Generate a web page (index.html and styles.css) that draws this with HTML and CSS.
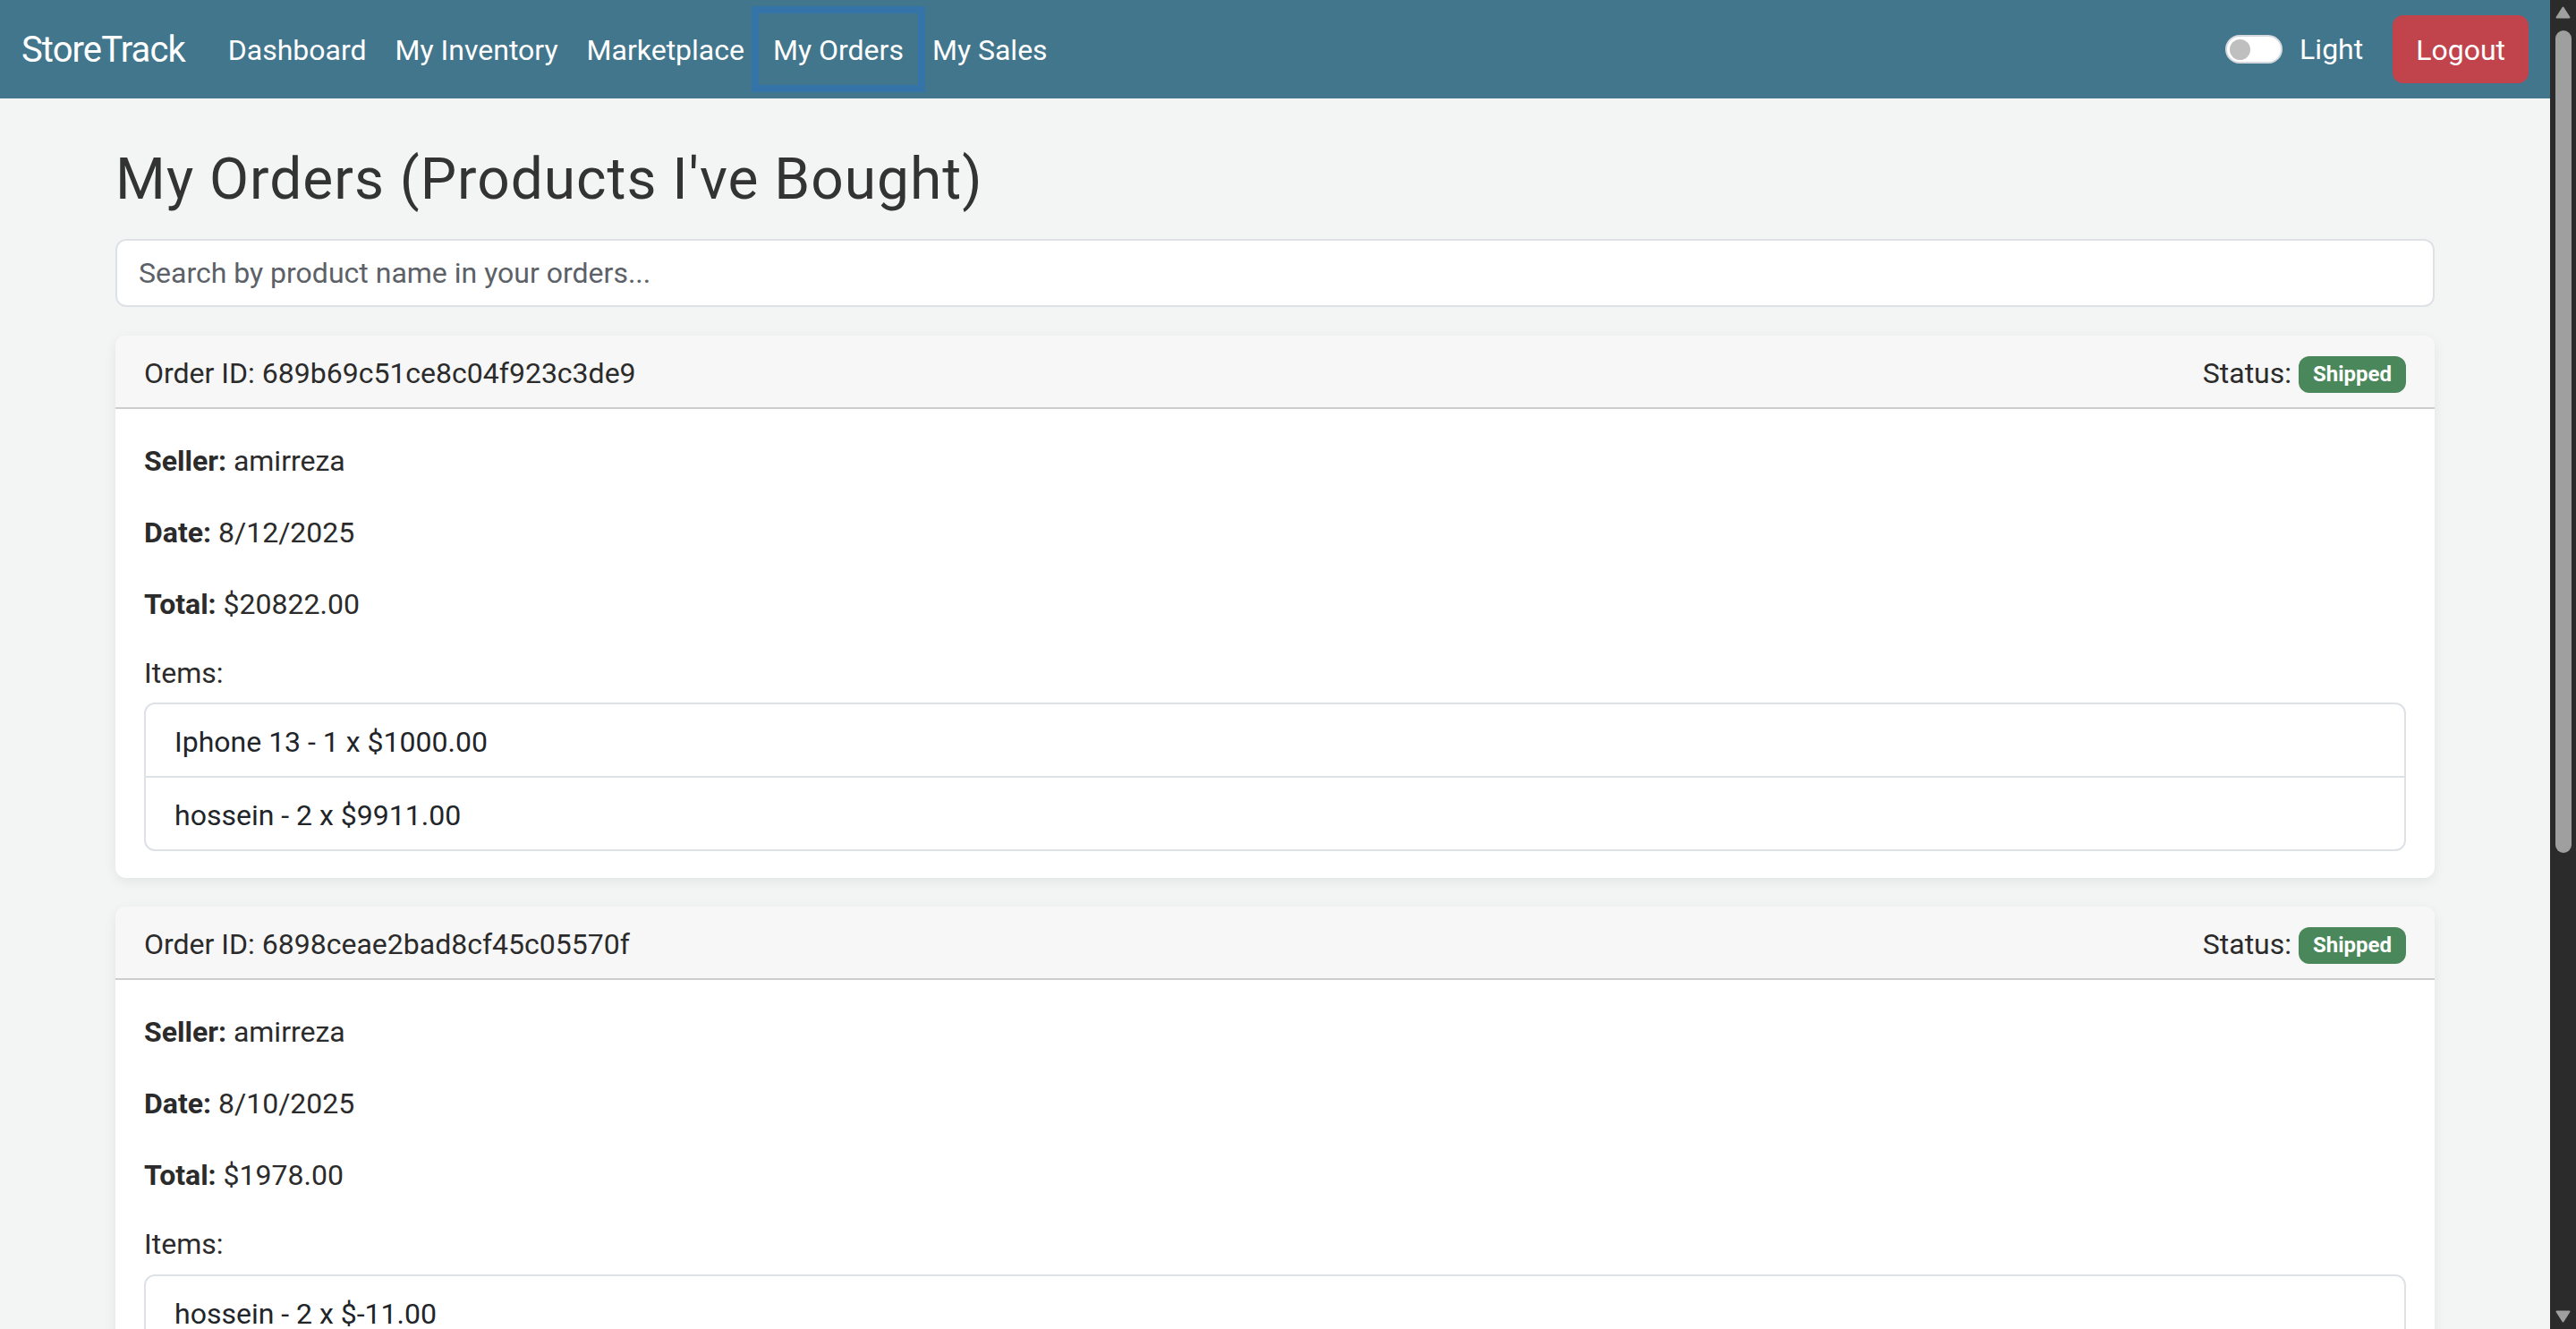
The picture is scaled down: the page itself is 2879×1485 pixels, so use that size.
FILE: index.html
```html
<!DOCTYPE html>
<html lang="en">
<head>
<meta charset="utf-8">
<title>StoreTrack - My Orders</title>
<link rel="stylesheet" href="styles.css">
</head>
<body>
<div class="app">
  <div class="page">
    <nav class="navbar">
      <div class="nav-left">
        <a class="brand" href="#">StoreTrack</a>
        <ul class="nav-links">
          <li><a class="nav-link" href="#">Dashboard</a></li>
          <li><a class="nav-link" href="#">My Inventory</a></li>
          <li><a class="nav-link" href="#">Marketplace</a></li>
          <li><a class="nav-link is-focused" href="#">My Orders</a></li>
          <li><a class="nav-link" href="#">My Sales</a></li>
        </ul>
      </div>
      <div class="nav-right">
        <label class="theme-toggle">
          <span class="switch"><span class="knob"></span></span>
          <span class="toggle-label">Light</span>
        </label>
        <button class="btn-logout" type="button">Logout</button>
      </div>
    </nav>

    <main class="container">
      <h2 class="page-title">My Orders (Products I've Bought)</h2>
      <input class="search" type="text" placeholder="Search by product name in your orders...">

      <section class="order-card">
        <div class="order-header">
          <span>Order ID: 689b69c51ce8c04f923c3de9</span>
          <span>Status: <span class="badge">Shipped</span></span>
        </div>
        <div class="order-body">
          <p><strong>Seller:</strong> amirreza</p>
          <p><strong>Date:</strong> 8/12/2025</p>
          <p><strong>Total:</strong> $20822.00</p>
          <h6 class="items-title">Items:</h6>
          <ul class="item-list">
            <li>Iphone 13 - 1 x $1000.00</li>
            <li>hossein - 2 x $9911.00</li>
          </ul>
        </div>
      </section>

      <section class="order-card">
        <div class="order-header">
          <span>Order ID: 6898ceae2bad8cf45c05570f</span>
          <span>Status: <span class="badge">Shipped</span></span>
        </div>
        <div class="order-body">
          <p><strong>Seller:</strong> amirreza</p>
          <p><strong>Date:</strong> 8/10/2025</p>
          <p><strong>Total:</strong> $1978.00</p>
          <h6 class="items-title">Items:</h6>
          <ul class="item-list">
            <li>hossein - 2 x $-11.00</li>
            <li>Iphone 13 - 2 x $1000.00</li>
          </ul>
        </div>
      </section>
    </main>
  </div>

  <aside class="scrollbar" aria-hidden="true">
    <span class="sb-button">
      <svg width="17" height="14" viewBox="0 0 17 14"><path d="M8.5 1.5 L15.5 12.5 L1.5 12.5 Z" fill="#9f9f9f" stroke="#9f9f9f" stroke-width="2" stroke-linejoin="round"/></svg>
    </span>
    <div class="sb-track"><div class="sb-thumb"></div></div>
    <span class="sb-button sb-button-down">
      <svg width="17" height="14" viewBox="0 0 17 14"><path d="M1.5 1.5 L15.5 1.5 L8.5 12.5 Z" fill="#9f9f9f" stroke="#9f9f9f" stroke-width="2" stroke-linejoin="round"/></svg>
    </span>
  </aside>
</div>
</body>
</html>
```
FILE: styles.css
```css
html, body {
  margin: 0;
  padding: 0;
}

body {
  background: #f3f5f4;
  color: #212529;
  font-family: "Segoe UI", Roboto, "Noto Sans", sans-serif;
  font-size: 32px;
  line-height: 1.5;
}

/* App frame: page + window scrollbar */
.app {
  display: flex;
  height: 100vh;
  overflow: hidden;
}

.page {
  flex: 1;
  min-width: 0;
  overflow: hidden;
}

.scrollbar {
  flex: none;
  width: 29px;
  background: #2b2b2b;
  display: flex;
  flex-direction: column;
  align-items: center;
}

.sb-button {
  display: flex;
  justify-content: center;
  height: 29px;
  padding-top: 7px;
  box-sizing: border-box;
}

.sb-button-down {
  padding-top: 8px;
}

.sb-button svg {
  display: block;
}

.sb-track {
  flex: 1;
  padding-top: 5px;
}

.sb-thumb {
  width: 18px;
  height: 919px;
  border-radius: 9px;
  background: #9f9f9f;
}

/* Navbar */
.navbar {
  display: flex;
  justify-content: space-between;
  align-items: center;
  padding: 15px 24px;
  background: #42768c;
}

.nav-left,
.nav-right {
  display: flex;
  align-items: center;
}

.brand {
  color: #fff;
  text-decoration: none;
  font-size: 40px;
  line-height: 60px;
  letter-spacing: -0.9px;
  padding: 11px 0 9px;
  margin-right: 32px;
}

.nav-links {
  display: flex;
  list-style: none;
  margin: 0;
  padding: 0;
}

.nav-link {
  display: block;
  padding: 17px 16px 15px;
  color: #fff;
  text-decoration: none;
  line-height: 48px;
}

.nav-link.is-focused {
  box-shadow: 0 0 0 8px rgba(13, 110, 253, 0.25);
}

.theme-toggle {
  display: flex;
  align-items: center;
  gap: 19px;
  color: #fff;
  margin-right: 33px;
}

.switch {
  box-sizing: border-box;
  width: 64px;
  height: 32px;
  border: 2px solid #d5d9dd;
  border-radius: 16px;
  background: #fff;
  display: flex;
  align-items: center;
  padding-left: 3px;
}

.knob {
  width: 23px;
  height: 23px;
  border-radius: 50%;
  background: #bfbfbf;
}

.btn-logout {
  font: inherit;
  line-height: 48px;
  color: #fff;
  background: #c1444c;
  border: 2px solid #c1444c;
  border-radius: 12px;
  padding: 13px 24px 11px;
}

/* Main */
.container {
  box-sizing: border-box;
  max-width: 2640px;
  margin: 53px auto 0;
  padding: 0 24px 32px;
}

.page-title {
  font-size: 64px;
  font-weight: 400;
  line-height: 1.2;
  letter-spacing: 1px;
  color: #333;
  margin: 0 0 27px;
}

.search {
  display: block;
  box-sizing: border-box;
  width: 100%;
  font: inherit;
  line-height: 48px;
  color: #212529;
  background: #fff;
  border: 2px solid #dee2e6;
  border-radius: 12px;
  padding: 12px 24px;
  margin-bottom: 32px;
}

.search::placeholder {
  color: #5c6168;
}

.order-card {
  background: #fff;
  border-radius: 12px;
  box-shadow: 0 4px 14px rgba(0, 0, 0, 0.07);
  margin-bottom: 32px;
  overflow: hidden;
}

.order-header {
  display: flex;
  justify-content: space-between;
  align-items: center;
  padding: 18px 32px 14px;
  background: #f7f7f7;
  border-bottom: 2px solid #cdcdcd;
  color: #2b2b2b;
}

.badge {
  display: inline-block;
  font-size: 24px;
  font-weight: 700;
  line-height: 1;
  padding: 8px 16px 9px;
  border-radius: 12px;
  background: #4a875a;
  color: #fff;
  vertical-align: 2px;
}

.order-body {
  padding: 34px 32px 30px;
  color: #2b2b2b;
}

.order-body p {
  margin: 0 0 32px;
}

.items-title {
  font-size: 32px;
  font-weight: 400;
  line-height: 1.2;
  margin: 0 0 14px;
  padding-top: 2px;
}

.item-list {
  list-style: none;
  margin: 0;
  padding: 0;
  border: 2px solid #dee2e6;
  border-radius: 12px;
  color: #212529;
}

.item-list li {
  padding: 18px 32px 14px;
  line-height: 48px;
}

.item-list li + li {
  border-top: 2px solid #dee2e6;
}
```
